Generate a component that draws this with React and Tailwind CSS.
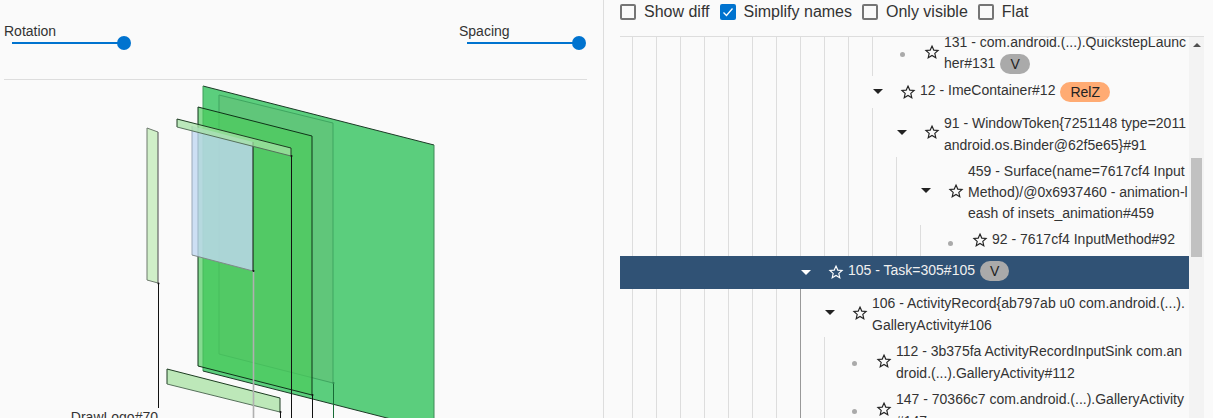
import React from "react";

const STAR = "M8 2.1 L9.75 6.1 L14.1 6.5 L10.8 9.4 L11.8 13.7 L8 11.45 L4.2 13.7 L5.2 9.4 L1.9 6.5 L6.25 6.1 Z";

function Slider({ label }) {
  return (
    <div className="w-[127px]">
      <div className="text-sm leading-[14px] text-[#333]">{label}</div>
      <div className="flex items-center h-[14px] -mt-[2px] ml-[8px]">
        <div className="w-[112px] h-[2px] bg-[#0073cf]" />
        <div className="w-[14px] h-[14px] -ml-[7px] rounded-full bg-[#0073cf]" />
      </div>
    </div>
  );
}

function Check({ label, checked }) {
  return (
    <div className="flex items-center gap-2">
      {checked ? (
        <div className="w-4 h-4 rounded-[2px] bg-[#0073cf] flex items-center justify-center">
          <svg width="12" height="12" viewBox="0 0 12 12" fill="none">
            <path d="M1.5 6.5 L4.5 9.5 L10.5 2.5" stroke="#fff" strokeWidth="1.3" />
          </svg>
        </div>
      ) : (
        <div className="w-4 h-4 rounded-[2px] border-2 border-[#757575]" />
      )}
      <span className="text-base leading-4 text-[#333] -mt-px">{label}</span>
    </div>
  );
}

function Chip({ children, orange }) {
  return (
    <span
      className={
        "inline-block h-5 leading-5 ml-[5px] px-[10px] rounded-[10px] text-sm text-[#222] break-normal align-middle " +
        (orange ? "bg-[#ffab73]" : "bg-[#aaaaaa]")
      }
    >
      {children}
    </span>
  );
}

const ROWS = [
  { lines: 11, h: "h-[48px]", kind: "dot", t: "leading-[21px] mt-[2px]", text: "131 - com.android.(...).QuickstepLauncher#131", chip: "V" },
  { lines: 10, h: "h-[32px]", kind: "arrow", t: "leading-[21px] -mt-[2px]", text: "12 - ImeContainer#12", chip: "RelZ", orange: true },
  { lines: 11, h: "h-[49px]", kind: "arrow", t: "leading-[22px] mt-[2px]", text: "91 - WindowToken{7251148 type=2011 android.os.Binder@62f5e65}#91" },
  { lines: 12, h: "h-[68px]", kind: "arrow", t: "leading-[21px] mt-[2px]", text: "459 - Surface(name=7617cf4 Input Method)/@0x6937460 - animation-leash of insets_animation#459" },
  { lines: 13, h: "h-[31px]", kind: "dot", t: "leading-[21px] -mt-[2px]", text: "92 - 7617cf4 InputMethod#92" },
  { lines: 7, h: "h-[33px]", kind: "arrow", t: "leading-[21px] -mt-[4px]", text: "105 - Task=305#105", chip: "V", selected: true },
  { lines: 8, h: "h-[48px]", kind: "arrow", t: "leading-[22px] mt-[2px]", text: "106 - ActivityRecord{ab797ab u0 com.android.(...).GalleryActivity#106", dark: 7 },
  { lines: 9, h: "h-[48px]", kind: "dot", t: "leading-[22px] mt-[2px]", text: "112 - 3b375fa ActivityRecordInputSink com.android.(...).GalleryActivity#112", dark: 7 },
  { lines: 9, h: "h-[48px]", kind: "dot", t: "leading-[22px] mt-[2px]", text: "147 - 70366c7 com.android.(...).GalleryActivity#147", dark: 7 },
];

function Row({ r }) {
  const fg = r.selected ? "#ffffff" : "#222222";
  return (
    <div className={"flex shrink-0 items-stretch " + r.h + (r.selected ? " bg-[#305275] text-[#f0f0f0]" : " text-[#333]")}>
      <div className="w-[12px] shrink-0" />
      {Array.from({ length: r.lines }).map((_, i) => (
        <div
          key={i}
          className={
            "w-[24px] shrink-0 border-l " +
            (r.selected ? "border-transparent" : i === r.dark ? "border-[#999999]" : "border-[#dddddd]")
          }
        />
      ))}
      <div className="w-[12px] shrink-0 flex items-center justify-center">
        {r.kind === "arrow" ? (
          <svg width="10" height="5" viewBox="0 0 10 5" className="-mt-px">
            <path d="M0 0 H10 L5 5 Z" fill={fg} />
          </svg>
        ) : (
          <div className="w-[5px] h-[5px] rounded-full bg-[#aaaaaa] mt-[5px]" />
        )}
      </div>
      <div className="w-[36px] shrink-0 flex items-center justify-end pr-[4px]">
        <svg width="16" height="16" viewBox="0 0 16 16" className="-mt-px">
          <path d={STAR} fill="none" stroke={fg} strokeWidth="1.15" />
        </svg>
      </div>
      <div className={"flex-1 min-w-0 self-center text-sm break-all " + r.t}>
        {r.text}
        {r.chip && <Chip orange={r.orange}>{r.chip}</Chip>}
      </div>
    </div>
  );
}

function Scene() {
  return (
    <svg width="603" height="338" viewBox="0 80 603 338" className="block">
      {/* far layer */}
      <polygon points="203,86 434,145 434,430 203,371" fill="#5bce7d" />
      <line x1="203" y1="86" x2="434" y2="145" stroke="#1c3a26" />
      <line x1="434" y1="145" x2="434" y2="430" stroke="#3f8a58" />
      <line x1="203" y1="86" x2="203" y2="371" stroke="#3f9c5a" />
      <line x1="203" y1="371" x2="434" y2="430" stroke="#1c3a26" />
      {/* inner layer */}
      <polygon points="219,95 333,123 333,383 219,354" fill="#60c67a" stroke="#3fa560" />
      {/* middle layer */}
      <polygon points="198,107 312,136 312,395 198,366" fill="#4bcb5c" fillOpacity="0.665" />
      <polyline points="198,366 198,107 312,136 312,395 198,366" fill="none" stroke="#0f3318" />
      {/* blue layer */}
      <polygon points="192,126 253,142 253,271 192,255" fill="#c2d8f2" fillOpacity="0.8" />
      <line x1="192" y1="126" x2="192" y2="255" stroke="#9aa8b8" />
      <line x1="192" y1="255" x2="253" y2="271" stroke="#7f8a8a" />
      <line x1="253" y1="142" x2="253" y2="271" stroke="#111" />
      {/* top strip */}
      <polygon points="177,119 291,148 291,156 177,127" fill="#a6e2a6" fillOpacity="0.75" />
      <polyline points="177,127 177,119 291,148 291,156" fill="none" stroke="#1e3d22" />
      <line x1="177" y1="127" x2="291" y2="156" stroke="#55705a" />
      {/* left strip */}
      <polygon points="147,128 158,132 158,283 147,280" fill="#d0efc8" />
      <polyline points="158,283 147,280 147,128 158,132" fill="none" stroke="#6d7a6d" />
      <line x1="158" y1="132" x2="158" y2="283" stroke="#666" strokeWidth="1.2" />
      {/* low strip */}
      <polygon points="167,369 280,398 280,412 167,384" fill="#bde8b9" />
      <polyline points="167,384 167,369 280,398 280,412" fill="none" stroke="#1e3d22" />
      <line x1="167" y1="384" x2="280" y2="412" stroke="#55705a" />
      {/* stems */}
      <line x1="158.5" y1="283" x2="158.5" y2="408" stroke="#111" />
      <line x1="253.5" y1="271" x2="253.5" y2="418" stroke="#b0b0b0" strokeWidth="1.6" />
      <line x1="280.5" y1="412" x2="280.5" y2="418" stroke="#111" />
      <line x1="291.5" y1="156" x2="291.5" y2="418" stroke="#111" />
      <line x1="312.5" y1="395" x2="312.5" y2="418" stroke="#111" />
      <line x1="333.5" y1="383" x2="333.5" y2="418" stroke="#176b35" />
      <circle cx="158.5" cy="283.5" r="1" fill="#111" />
      <circle cx="253.5" cy="271" r="1" fill="#111" />
      <circle cx="291.5" cy="156" r="1" fill="#111" />
      <circle cx="312.5" cy="395" r="1" fill="#111" />
      <circle cx="333.5" cy="383" r="1" fill="#2f8a50" />
      <circle cx="280.5" cy="412" r="1" fill="#111" />
      <text x="158" y="422" textAnchor="end" fontSize="14" fill="#333">DrawLogo#70</text>
    </svg>
  );
}

export default function App() {
  return (
    <div className="flex w-[1213px] h-[418px] overflow-hidden bg-[#fafafa] font-['Liberation_Sans',Arial,sans-serif]">
      <div className="w-[604px] shrink-0 border-r border-[#dddddd]">
        <div className="h-[80px] ml-[4px] mr-[16px] pt-[24px] pr-px flex justify-between border-b border-[#dddddd]">
          <Slider label="Rotation" />
          <Slider label="Spacing" />
        </div>
        <Scene />
      </div>
      <div className="flex-1 min-w-0 pl-[16px] pr-[9px] flex flex-col">
        <div className="h-[37px] shrink-0 pt-[4px] flex items-start gap-[10px] border-b border-[#dddddd]">
          <Check label="Show diff" />
          <Check label="Simplify names" checked />
          <Check label="Only visible" />
          <Check label="Flat" />
        </div>
        <div className="flex flex-1 min-h-0">
          <div className="flex-1 min-w-0 overflow-hidden">
            <div className="flex flex-col -mt-[9px]">
              {ROWS.map((r) => (
                <Row key={r.text} r={r} />
              ))}
            </div>
          </div>
          <div className="w-[15px] shrink-0 bg-[#f3f3f3] flex flex-col items-center">
            <svg width="8" height="4" viewBox="0 0 8 4" className="mt-[6px]">
              <path d="M0 4 H8 L4 0 Z" fill="#505050" />
            </svg>
            <div className="w-[11px] h-[99px] mt-[111px] bg-[#c1c1c1]" />
          </div>
        </div>
      </div>
    </div>
  );
}
